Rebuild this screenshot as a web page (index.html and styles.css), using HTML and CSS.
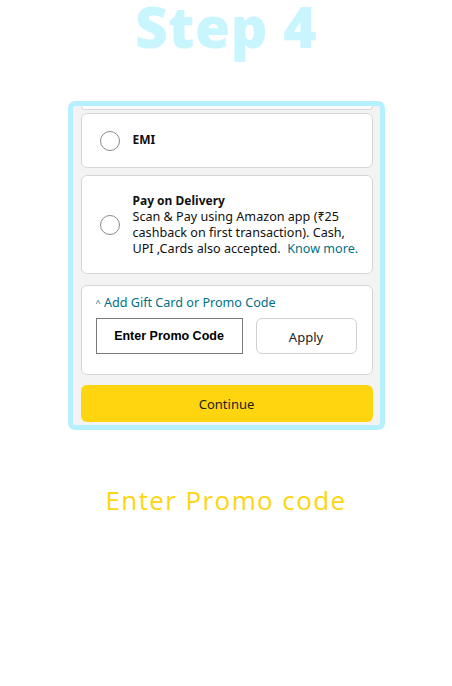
FILE: index.html
```html
<!DOCTYPE html>
<html>
<head>
<meta charset="utf-8">
<link rel="stylesheet" href="styles.css">
</head>
<body>
<div class="page">
  <h1 class="step">Step 4</h1>
  <div class="frame">
    <div class="inner">
      <div class="stub"></div>
      <div class="card emi">
        <span class="radio"></span>
        <span class="emi-label">EMI</span>
      </div>
      <div class="card pod">
        <span class="radio"></span>
        <div class="pod-text">
          <div class="pod-title">Pay on Delivery</div>
          <div class="pod-desc">Scan &amp; Pay using Amazon app (₹25 cashback on first transaction). Cash, UPI ,Cards also accepted.&nbsp; <span class="link">Know more.</span></div>
        </div>
      </div>
      <div class="card gift">
        <div class="gift-link"><span class="caret">^</span> Add Gift Card or Promo Code</div>
        <div class="gift-row">
          <div class="promo-input">Enter Promo Code</div>
          <div class="apply">Apply</div>
        </div>
      </div>
      <div class="continue">Continue</div>
    </div>
  </div>
  <p class="caption">Enter Promo code</p>
</div>
</body>
</html>
```
FILE: styles.css
```css
html, body {
  margin: 0;
  padding: 0;
  background: #ffffff;
}
.page {
  width: 452px;
  height: 686px;
  display: flex;
  flex-direction: column;
  align-items: center;
  font-family: "Noto Sans", "Open Sans", sans-serif;
}
.step {
  margin: 0;
  font-family: "Open Sans", Lato, sans-serif;
  font-weight: 800;
  font-size: 57px;
  line-height: 52px;
  height: 52px;
  padding-top: 0;
  color: #c9f5ff;
  letter-spacing: 0.5px;
}
.frame {
  margin-top: 49px;
  margin-left: 0;
  width: 317px;
  height: 329px;
  box-sizing: border-box;
  border: 5px solid #b4f0fd;
  border-radius: 7px;
  background: #f3f3f3;
  overflow: hidden;
}
.inner {
  padding: 0 7px 0 8px;
  display: flex;
  flex-direction: column;
}
.stub {
  height: 3px;
  border: 1px solid #d8d8d8;
  border-top: none;
  border-radius: 0 0 6px 6px;
  background: #fff;
}
.card {
  background: #ffffff;
  border: 1px solid #d6d6d6;
  border-radius: 6px;
  box-sizing: border-box;
}
.radio {
  width: 20px;
  height: 20px;
  border: 1px solid #8a8a8a;
  border-radius: 50%;
  box-sizing: border-box;
  flex: none;
  background: #fff;
}
.emi {
  margin-top: 3px;
  height: 55px;
  display: flex;
  align-items: center;
  padding-left: 18px;
  gap: 13px;
}
.emi-label {
  font-size: 12px;
  font-weight: 700;
  color: #111;
  margin-top: -2px;
}
.pod {
  margin-top: 7px;
  height: 99px;
  display: flex;
  align-items: center;
  padding-left: 18px;
  gap: 13px;
}
.pod-text {
  font-size: 12.6px;
  line-height: 16px;
  color: #111;
  width: 232px;
  margin-top: 1px;
}
.pod-title {
  font-weight: 700;
  font-size: 12px;
}
.link {
  color: #007185;
}
.gift {
  margin-top: 11px;
  height: 90px;
  padding: 9px 15px 0 14px;
}
.gift-link {
  color: #007185;
  font-size: 12.6px;
  line-height: 16px;
}
.caret {
  font-size: 9px;
  vertical-align: 1px;
}
.gift-row {
  margin-top: 7px;
  display: flex;
  justify-content: space-between;
}
.promo-input {
  width: 147px;
  height: 36px;
  box-sizing: border-box;
  border: 1px solid #7a7a7a;
  display: flex;
  align-items: center;
  justify-content: center;
  font-family: "Liberation Sans", Arial, sans-serif;
  font-weight: 700;
  font-size: 12.5px;
  color: #000;
}
.apply {
  width: 101px;
  height: 36px;
  box-sizing: border-box;
  border: 1px solid #d0d0d0;
  border-radius: 6px;
  display: flex;
  align-items: center;
  justify-content: center;
  font-size: 13px;
  color: #222;
  padding-top: 2px;
}
.continue {
  margin-top: 10px;
  height: 37px;
  background: #fed50f;
  border-radius: 6px;
  display: flex;
  align-items: center;
  justify-content: center;
  font-size: 13px;
  color: #222;
}
.caption {
  margin: 53px 0 0 0;
  font-family: "Open Sans", Lato, sans-serif;
  font-size: 26px;
  line-height: 34px;
  letter-spacing: 1.4px;
  color: #fed50f;
}
```
